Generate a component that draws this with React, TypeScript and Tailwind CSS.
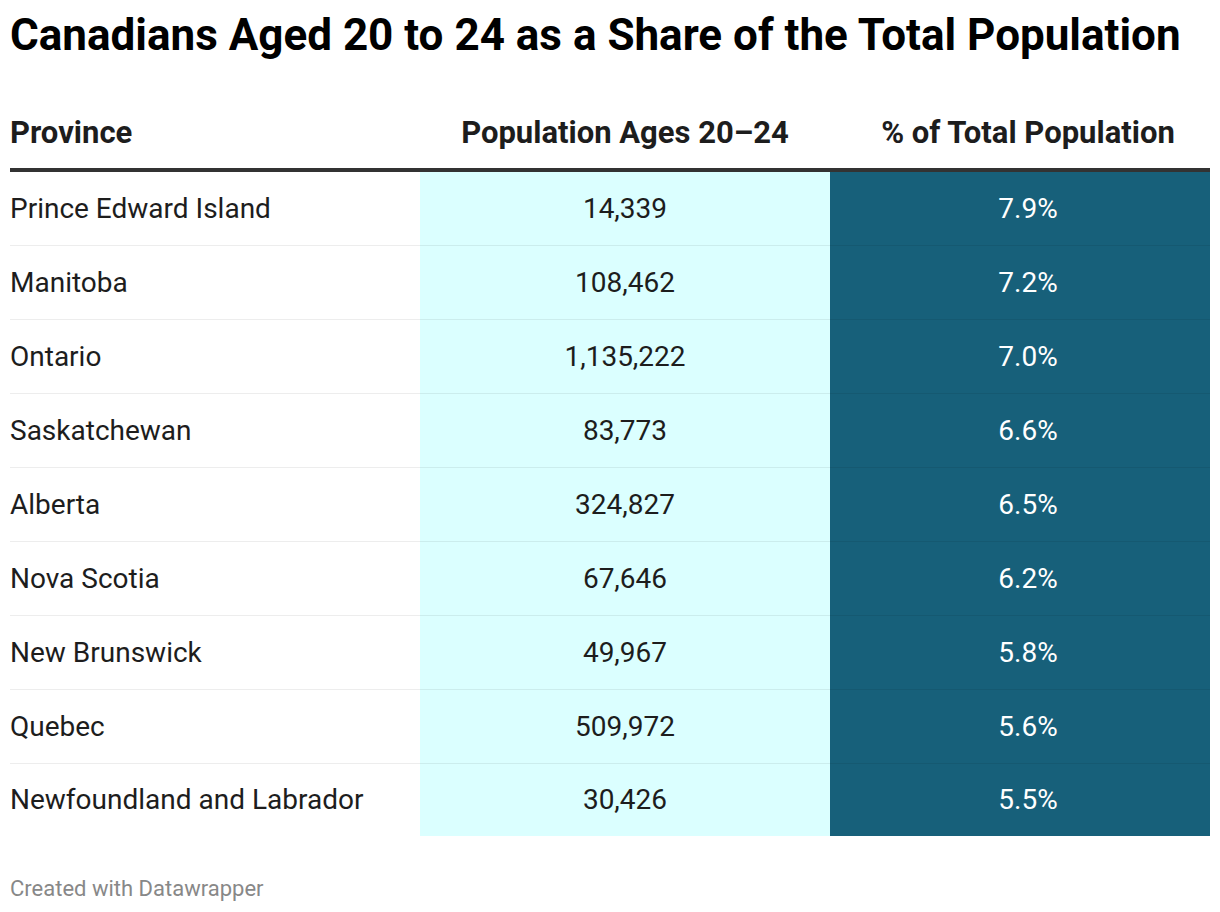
const rows: [string, string, string][] = [
  ['Prince Edward Island', '14,339', '7.9%'],
  ['Manitoba', '108,462', '7.2%'],
  ['Ontario', '1,135,222', '7.0%'],
  ['Saskatchewan', '83,773', '6.6%'],
  ['Alberta', '324,827', '6.5%'],
  ['Nova Scotia', '67,646', '6.2%'],
  ['New Brunswick', '49,967', '5.8%'],
  ['Quebec', '509,972', '5.6%'],
  ['Newfoundland and Labrador', '30,426', '5.5%'],
];

export default function App() {
  return (
    <div className="min-h-[912px] w-[1220px] bg-white px-[10px] font-['Roboto',sans-serif] text-[#1d1d1d]">
      {/* title */}
      <h1 className="pt-[9px] text-[44px] font-bold leading-[52px] text-black">
        Canadians Aged 20 to 24 as a Share of the Total Population
      </h1>

      {/* table */}
      <div className="grid grid-cols-[410px_410px_380px]">
        <div className="col-span-3 grid h-[111px] grid-cols-[410px_410px_380px] items-end border-b-[4px] border-[#333333] pb-[17px] text-[31px] font-bold leading-[36px]">
          <div>Province</div>
          <div className="text-center">Population Ages 20–24</div>
          <div className="pl-4 text-center">% of Total Population</div>
        </div>

        {rows.map(([name, pop, pct], i) => {
          const last = i === rows.length - 1;
          const line = last ? '' : 'border-b border-black/[0.07]';
          return (
            <div key={name} className="col-span-3 grid grid-cols-[410px_410px_380px] text-[28px] leading-[32px]">
              <div className={`flex items-center ${last ? 'h-[72px]' : 'h-[74px]'} ${line}`}>{name}</div>
              <div className={`flex items-center justify-center bg-[#dbffff] ${last ? 'h-[72px]' : 'h-[74px]'} ${line}`}>{pop}</div>
              <div className={`flex items-center justify-center bg-[#17607a] pl-4 text-white ${last ? 'h-[72px]' : 'h-[74px]'} ${line}`}>{pct}</div>
            </div>
          );
        })}
      </div>

      {/* footer */}
      <div className="mt-[40px] text-[22px] leading-[26px] text-[#888888]">Created with Datawrapper</div>
    </div>
  );
}
